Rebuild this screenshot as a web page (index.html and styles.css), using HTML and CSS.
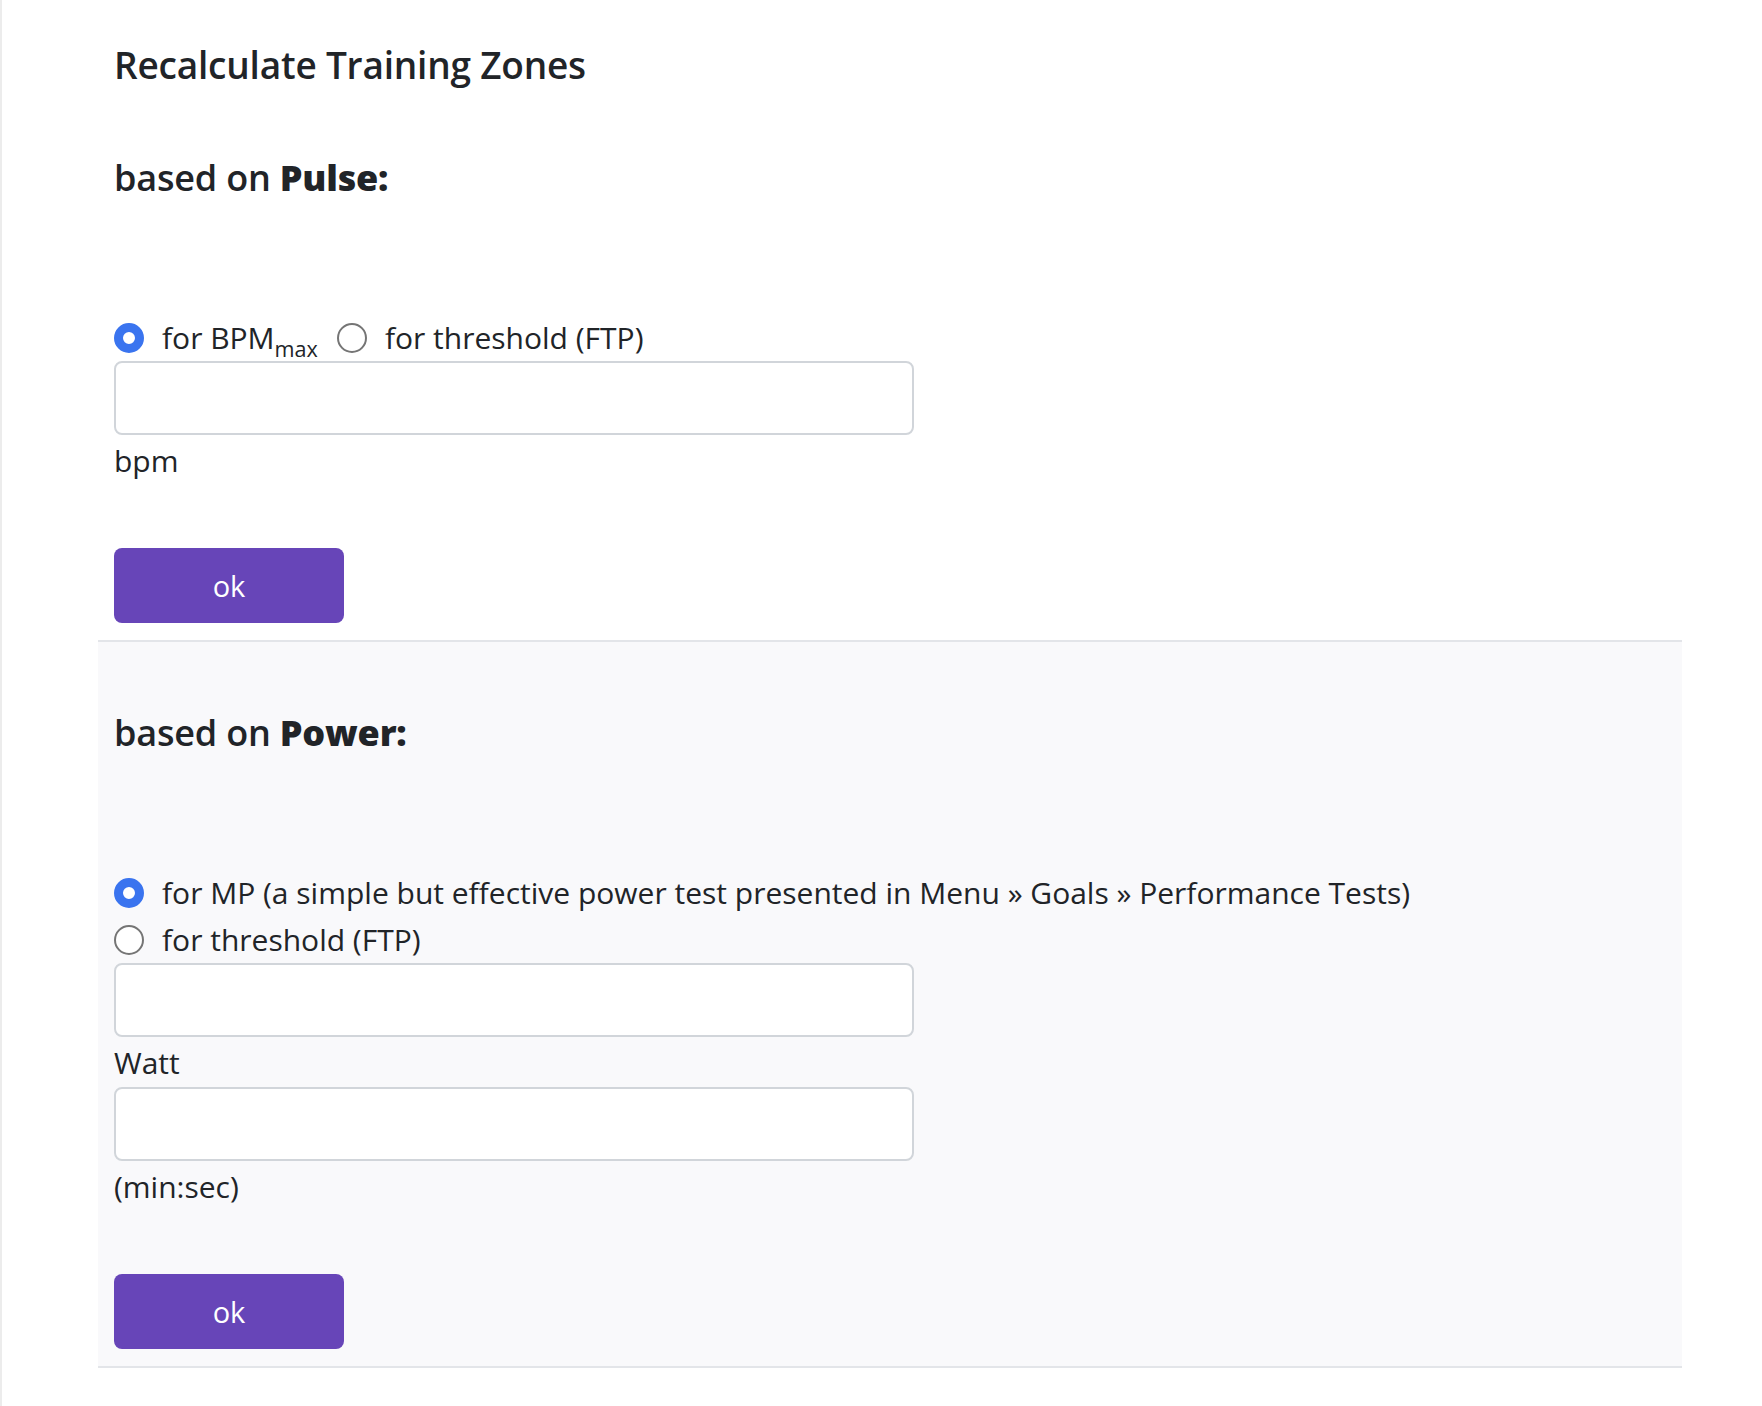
FILE: index.html
```html
<!DOCTYPE html>
<html>
<head>
<title>Recalculate Training Zones</title>
<link rel="stylesheet" href="styles.css">
</head>
<body>

<div id="page">
  <div class="zoneSection">
    <h1 class="pageTitle">Recalculate Training Zones</h1>

    <h2 class="zoneHeading">based on <b>Pulse:</b></h2>

    <form class="zoneForm">
      <div class="radioRow">
        <label class="radioLabel">
          <input type="radio" name="pulseMode" checked>
          <span>for BPM<sub>max</sub></span>
        </label>
        <label class="radioLabel">
          <input type="radio" name="pulseMode">
          <span>for threshold (FTP)</span>
        </label>
      </div>
      <input type="text" class="valueInput">
      <div class="unitLabel">bpm</div>
      <button type="button" class="okButton">ok</button>
    </form>
  </div>

  <div class="zoneSection shaded">
    <h2 class="zoneHeading">based on <b>Power:</b></h2>

    <form class="zoneForm">
      <div class="radioRow">
        <label class="radioLabel">
          <input type="radio" name="powerMode" checked>
          <span>for MP (a simple but effective power test presented in Menu » Goals » Performance Tests)</span>
        </label>
      </div>
      <div class="radioRow">
        <label class="radioLabel">
          <input type="radio" name="powerMode">
          <span>for threshold (FTP)</span>
        </label>
      </div>
      <input type="text" class="valueInput">
      <div class="unitLabel">Watt</div>
      <input type="text" class="valueInput">
      <div class="unitLabel">(min:sec)</div>
      <button type="button" class="okButton">ok</button>
    </form>
  </div>
</div>

</body>
</html>
```

FILE: styles.css
```css
body {
  margin: 0;
  background-color: white;
  color: #212428;
  font-family: "Open Sans", "Noto Sans", sans-serif;
  font-size: 30px;
}

#page {
  min-height: 100vh;
  border-left: 2px solid #ececec;
  padding-left: 96px;
  padding-right: 80px;
  box-sizing: border-box;
}

.zoneSection {
  display: flow-root;
  padding: 0 16px 17px;
  border-bottom: 2px solid #e3e5e9;
}

.zoneSection.shaded {
  background-color: #f9f9fb;
}

.pageTitle {
  margin: 0;
  padding-top: 43px;
  font-size: 37px;
  line-height: 44px;
  font-weight: 600;
  letter-spacing: -0.2px;
}

.zoneHeading {
  margin: 67px 0 0;
  font-size: 36px;
  line-height: 48px;
  font-weight: 600;
  letter-spacing: -0.2px;
}

.zoneHeading b {
  font-weight: 800;
}

.zoneForm {
  margin-top: 112px;
  display: flex;
  flex-direction: column;
  align-items: flex-start;
}

.radioRow {
  display: flex;
  align-items: center;
  gap: 19px;
  height: 47px;
}

.radioLabel {
  display: flex;
  align-items: center;
  gap: 18px;
  white-space: nowrap;
}

.radioLabel sub {
  font-size: 0.72em;
  line-height: 0;
  vertical-align: -0.35em;
}

.radioLabel input[type="radio"] {
  appearance: none;
  margin: 0;
  width: 30px;
  height: 30px;
  border: 2px solid #757575;
  border-radius: 50%;
  background-color: white;
  box-sizing: border-box;
  flex-shrink: 0;
}

.radioLabel input[type="radio"]:checked {
  border: 9px solid #3a74ef;
}

.valueInput {
  width: 800px;
  height: 74px;
  margin: 0;
  border: 2px solid #d1d5da;
  border-radius: 8px;
  background-color: white;
  box-sizing: border-box;
  font-size: 28px;
  padding: 0 14px;
}

.unitLabel {
  padding-top: 2px;
  line-height: 48px;
}

.okButton {
  margin-top: 63px;
  width: 230px;
  height: 75px;
  border: none;
  border-radius: 8px;
  background-color: #6745b8;
  color: white;
  font-family: inherit;
  font-size: 29px;
  cursor: pointer;
}
```
